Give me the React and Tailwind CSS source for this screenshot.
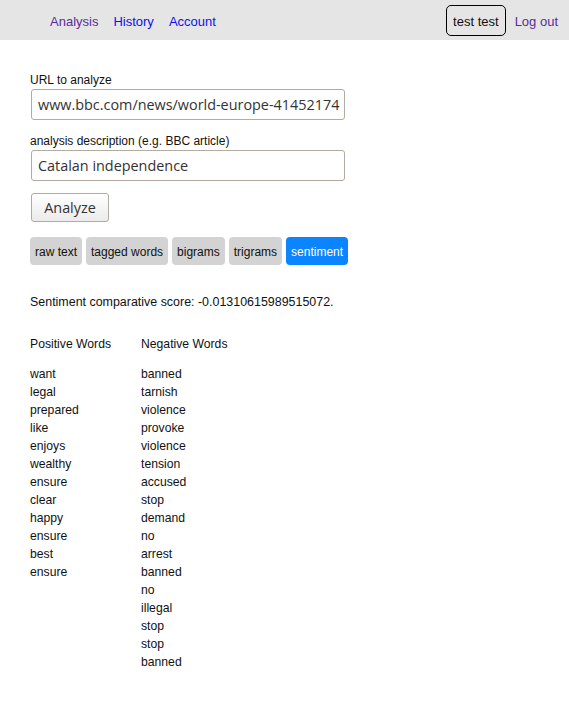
import React from "react";

const positive = ["want","legal","prepared","like","enjoys","wealthy","ensure","clear","happy","ensure","best","ensure"];
const negative = ["banned","tarnish","violence","provoke","violence","tension","accused","stop","demand","no","arrest","banned","no","illegal","stop","stop","banned"];
const tabs = ["raw text","tagged words","bigrams","trigrams","sentiment"];

export default function App() {
  return (
    <div className="min-h-[719px] bg-white text-[#111] font-['Liberation_Sans',Arial,sans-serif]">
      <header className="h-10 bg-[#e5e5e5] flex items-center text-[13px]">
        <nav className="flex items-center pl-[50px] gap-[15px] pt-[3px]">
          <a className="text-[#5a2d9c]">Analysis</a>
          <a className="text-[#1010ee]">History</a>
          <a className="text-[#1010ee]">Account</a>
        </nav>
        <div className="ml-auto flex items-center pr-[11px]">
          <span className="h-[31px] px-[6px] pt-[3px] flex items-center border border-black rounded-[5px] text-[#111]">test test</span>
          <a className="ml-[9px] pt-[3px] text-[#5a2d9c]">Log out</a>
        </div>
      </header>
      <main className="pl-[30px] pt-[33px] text-[12px]">
        <label className="block leading-[14px]">URL to analyze</label>
        <div className="mt-[2px] w-[314px] h-[31px] ml-px border border-[#b3aba1] rounded-[3px] flex items-center px-[6px] text-[14.4px] text-[#333] font-['Open_Sans','Noto_Sans',sans-serif] overflow-hidden whitespace-nowrap">
          www.bbc.com/news/world-europe-41452174
        </div>
        <label className="block leading-[14px] mt-[14px]">analysis description (e.g. BBC article)</label>
        <div className="mt-[2px] w-[314px] h-[31px] ml-px border border-[#b3aba1] rounded-[3px] flex items-center px-[6px] text-[14.4px] text-[#333] font-['Open_Sans','Noto_Sans',sans-serif]">
          Catalan independence
        </div>
        <button className="mt-[12px] ml-px w-[78px] h-[29px] border border-[#b3aba1] rounded-[3px] bg-gradient-to-b from-white to-[#ecebea] text-[14.4px] text-[#333] font-['Open_Sans','Noto_Sans',sans-serif] flex items-center justify-center">
          Analyze
        </button>
        <div className="mt-[15px] flex gap-[4px] text-[12px]">
          {tabs.map((t) => (
            <span
              key={t}
              className={
                t === "sentiment"
                  ? "h-[28px] px-[5px] pt-px flex items-center rounded-[4px] bg-[#0a84ff] text-white"
                  : "h-[28px] px-[5px] pt-px flex items-center rounded-[4px] bg-[#d3d3d3] text-[#111]"
              }
            >
              {t}
            </span>
          ))}
        </div>
        <p className="mt-[30px] leading-[14px] text-[12.45px]">Sentiment comparative score: -0.01310615989515072.</p>
        <div className="mt-[28px] flex text-[12.2px]">
          <div className="w-[111px]">
            <div className="leading-[14px]">Positive Words</div>
            <ul className="mt-[14px]">
              {positive.map((w, i) => (
                <li key={i} className="leading-[18px]">{w}</li>
              ))}
            </ul>
          </div>
          <div>
            <div className="leading-[14px]">Negative Words</div>
            <ul className="mt-[14px]">
              {negative.map((w, i) => (
                <li key={i} className="leading-[18px]">{w}</li>
              ))}
            </ul>
          </div>
        </div>
      </main>
    </div>
  );
}
